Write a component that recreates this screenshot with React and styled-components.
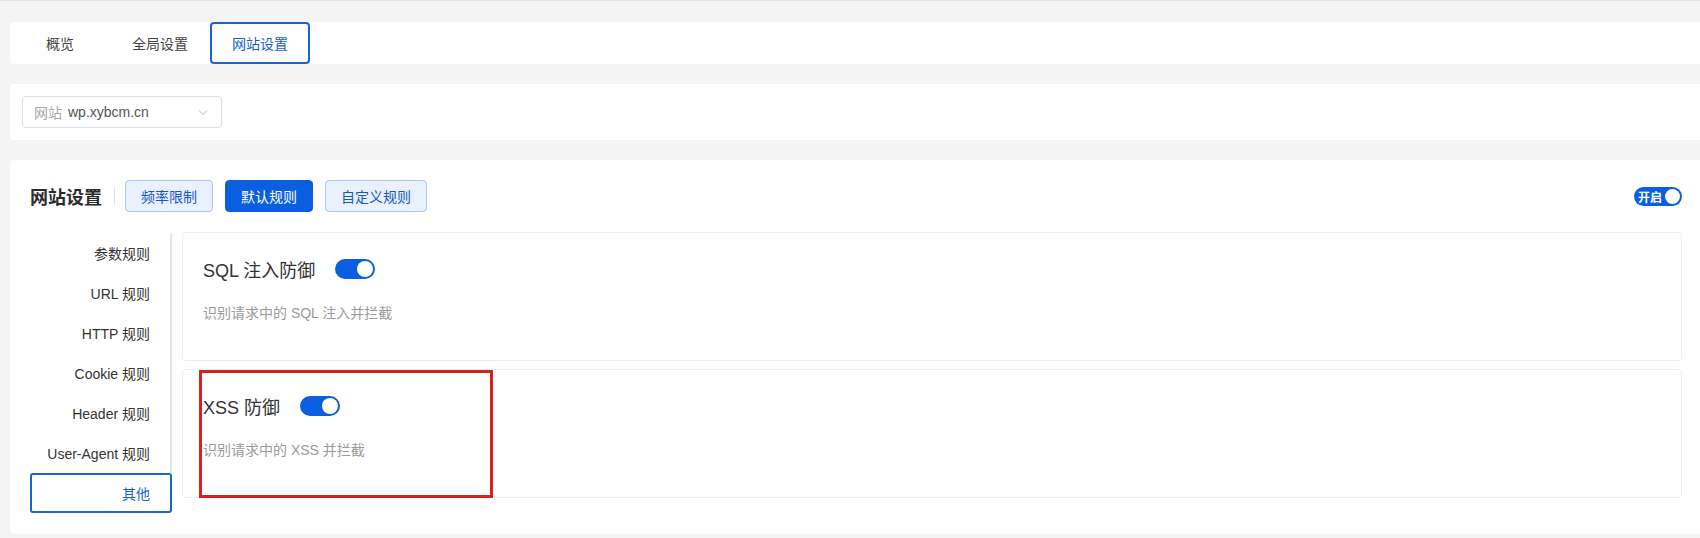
import React from 'react';
import styled, { createGlobalStyle } from 'styled-components';

const GlobalStyle = createGlobalStyle`
  body {
    margin: 0;
    background: #f4f4f4;
    font-family: "Liberation Sans", "Noto Sans CJK SC", sans-serif;
    color: #333;
  }
`;

const Page = styled.div`
  border-top: 1px solid #e3e3e3;
  padding: 21px 0 0 10px;
  display: flex;
  flex-direction: column;
  gap: 20px;
  min-height: 516px;
`;

const Card = styled.div`
  background: #fff;
  border-radius: 4px 0 0 4px;
`;

const TabBar = styled(Card)`
  display: flex;
  height: 42px;
`;

const Tab = styled.div`
  width: 100px;
  box-sizing: border-box;
  display: flex;
  align-items: center;
  justify-content: center;
  font-size: 14px;
  color: ${p => (p.$active ? '#1a5fc8' : '#444')};
  border: 2px solid ${p => (p.$active ? '#1a64d6' : 'transparent')};
  border-radius: 4px;
`;

const SiteBar = styled(Card)`
  padding: 12px;
  height: 32px;
`;

const Select = styled.div`
  width: 200px;
  height: 32px;
  box-sizing: border-box;
  border: 1px solid #dcdfe6;
  border-radius: 4px;
  display: flex;
  align-items: center;
  padding: 0 12px 0 11px;
  font-size: 14px;
  gap: 6px;
`;

const SelectLabel = styled.span`
  color: #a8a8a8;
`;

const SelectValue = styled.span`
  color: #555;
  flex: 1;
`;

const Main = styled(Card)`
  padding: 20px 18px 21px 20px;
`;

const Header = styled.div`
  display: flex;
  align-items: center;
  height: 32px;
`;

const Title = styled.h2`
  margin: 0;
  font-size: 18px;
  font-weight: 700;
  color: #2b2b2b;
`;

const Divider = styled.span`
  width: 1px;
  height: 18px;
  background: #e3e3e3;
  margin: 0 10px 0 12px;
`;

const Button = styled.button`
  height: 32px;
  padding: 0 15px;
  margin: 0 12px 0 0;
  font-family: inherit;
  font-size: 14px;
  border-radius: 4px;
  border: 1px solid ${p => (p.$primary ? '#0a5ee0' : '#a9c5ef')};
  background: ${p => (p.$primary ? '#0a5ee0' : '#e8f1fd')};
  color: ${p => (p.$primary ? '#fff' : '#1758c2')};
`;

const Spacer = styled.div`
  flex: 1;
`;

const MasterSwitch = styled.div`
  width: 48px;
  height: 19px;
  border-radius: 10px;
  background: #0a5ee0;
  display: flex;
  align-items: center;
  justify-content: space-between;
  padding: 0 2px 0 4px;
  box-sizing: border-box;
  color: #fff;
  font-size: 12px;
  font-weight: 700;
`;

const Knob = styled.span`
  width: ${p => p.$size}px;
  height: ${p => p.$size}px;
  border-radius: 50%;
  background: #fff;
`;

const Body = styled.div`
  display: flex;
  gap: 10px;
  margin-top: 20px;
`;

const Nav = styled.ul`
  list-style: none;
  margin: 0;
  padding: 0;
  width: 142px;
  flex-shrink: 0;
  display: flex;
  flex-direction: column;
  padding-top: 1px;
`;

const NavItem = styled.li`
  height: 40px;
  box-sizing: border-box;
  display: flex;
  align-items: center;
  justify-content: flex-end;
  padding-right: 20px;
  font-size: 14px;
  color: ${p => (p.$active ? '#1a5fc8' : '#333')};
  border-right: 2px solid #e6e6e6;
  ${p =>
    p.$active &&
    `
    border: 2px solid #1a64d6;
    border-radius: 3px;
  `}
`;

const RuleList = styled.div`
  flex: 1;
  display: flex;
  flex-direction: column;
  gap: 8px;
`;

const RuleCard = styled.div`
  position: relative;
  border: 1px solid #eceef2;
  border-radius: 4px;
  padding: 26px 20px 37px;
  display: flex;
  flex-direction: column;
  gap: 24px;
`;

const RuleHead = styled.div`
  display: flex;
  align-items: center;
  gap: 20px;
  height: 20px;
`;

const RuleName = styled.span`
  font-size: 18px;
  color: #333;
`;

const Toggle = styled.div`
  width: 40px;
  height: 20px;
  border-radius: 10px;
  background: #0a5ee0;
  display: flex;
  align-items: center;
  justify-content: flex-end;
  padding: 0 2px;
  box-sizing: border-box;
`;

const RuleDesc = styled.div`
  font-size: 14px;
  line-height: 20px;
  color: #9a9a9a;
`;

const Highlight = styled.div`
  position: absolute;
  left: 16px;
  top: 0;
  width: 294px;
  height: 128px;
  box-sizing: border-box;
  border: 3px solid #d9201e;
  pointer-events: none;
`;

const Chevron = () => (
  <svg width="12" height="12" viewBox="0 0 12 12">
    <path d="M2 4.5l4 4 4-4" fill="none" stroke="#b8b8b8" strokeWidth="1" />
  </svg>
);

const navItems = ['参数规则', 'URL 规则', 'HTTP 规则', 'Cookie 规则', 'Header 规则', 'User-Agent 规则', '其他'];

const rules = [
  { name: 'SQL 注入防御', desc: '识别请求中的 SQL 注入并拦截' },
  { name: 'XSS 防御', desc: '识别请求中的 XSS 并拦截', marked: true },
];

export default function App() {
  return (
    <>
      <GlobalStyle />
      <Page>
        <TabBar>
          <Tab>概览</Tab>
          <Tab>全局设置</Tab>
          <Tab $active>网站设置</Tab>
        </TabBar>
        <SiteBar>
          <Select>
            <SelectLabel>网站</SelectLabel>
            <SelectValue>wp.xybcm.cn</SelectValue>
            <Chevron />
          </Select>
        </SiteBar>
        <Main>
          <Header>
            <Title>网站设置</Title>
            <Divider />
            <Button>频率限制</Button>
            <Button $primary>默认规则</Button>
            <Button>自定义规则</Button>
            <Spacer />
            <MasterSwitch>
              开启
              <Knob $size={15} />
            </MasterSwitch>
          </Header>
          <Body>
            <Nav>
              {navItems.map(item => (
                <NavItem key={item} $active={item === '其他'}>
                  {item}
                </NavItem>
              ))}
            </Nav>
            <RuleList>
              {rules.map(rule => (
                <RuleCard key={rule.name}>
                  <RuleHead>
                    <RuleName>{rule.name}</RuleName>
                    <Toggle>
                      <Knob $size={16} />
                    </Toggle>
                  </RuleHead>
                  <RuleDesc>{rule.desc}</RuleDesc>
                  {rule.marked && <Highlight />}
                </RuleCard>
              ))}
            </RuleList>
          </Body>
        </Main>
      </Page>
    </>
  );
}
